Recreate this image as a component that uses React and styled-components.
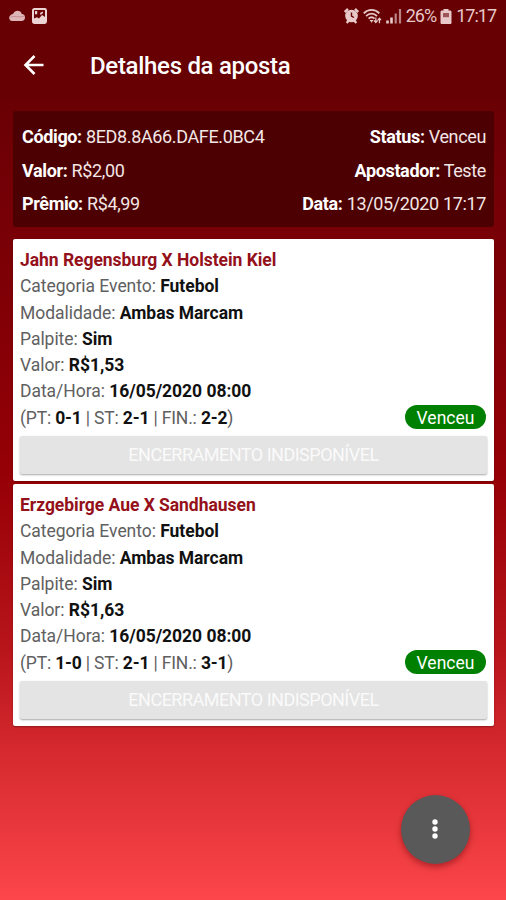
import React from "react";
import styled, {createGlobalStyle} from "styled-components";

const GlobalStyle = createGlobalStyle`
  * {
    box-sizing: border-box;
  }

  body {
    margin: 0;
    font-family: Roboto, sans-serif;
  }
`

const Screen = styled.div`
  width: 100%;
  height: 100vh;
  min-height: 900px;
  position: relative;
  display: flex;
  flex-direction: column;
  overflow: hidden;
  background: linear-gradient(180deg, #660003 0, #6a0004 100px, #780006 235px, #960006 480px, #b8151b 650px, #d0262b 735px, #fc464b 900px);
`

const StatusBar = styled.div`
  height: 32px;
  padding: 0 10px 0 9px;
  display: flex;
  align-items: center;
  justify-content: space-between;
  background-color: #660003;
  color: #e8c8c9;
`

const StatusGroup = styled.div`
  display: flex;
  align-items: center;
  gap: ${props => props.$gap || "4px"};
`

const StatusText = styled.span`
  font-size: 18px;
  line-height: 32px;
  letter-spacing: ${props => props.$spacing || "0"};
`

const Toolbar = styled.header`
  height: 68px;
  padding: 0 21px;
  display: flex;
  align-items: center;
  gap: 42px;
  background-color: #660003;
`

const BackButton = styled.button`
  width: 27px;
  height: 28px;
  padding: 0 0 2px;
  border: 0;
  display: flex;
  align-items: center;
  background: none;
  color: #fff;
`

const Title = styled.h1`
  margin: 0;
  font-size: 24px;
  line-height: 28px;
  font-weight: 500;
  letter-spacing: -0.3px;
  color: #fff;
`

const Content = styled.main`
  padding: 11px 12px 0 13px;
`

const Summary = styled.section`
  height: 116px;
  padding: 9px 8px 7px 9px;
  display: flex;
  flex-direction: column;
  border-radius: 3px;
  background-color: #4c0001;
`

const SummaryRow = styled.div`
  display: flex;
  justify-content: space-between;
  font-size: 18px;
  line-height: 33.5px;
  letter-spacing: -0.36px;
  color: #f3e6e6;

  b {
    font-weight: 700;
    color: #fff;
  }
`

const BetList = styled.div`
  margin-top: 12px;
  display: flex;
  flex-direction: column;
  gap: 3px;
`

const BetCard = styled.article`
  height: 242px;
  padding: 8px 7px 0 7px;
  border-radius: 2px;
  background-color: #fff;
  box-shadow: 0 1px 2px rgba(60, 0, 0, 0.4);
`

const Line = styled.div`
  font-size: 17.5px;
  line-height: 26.3px;
  letter-spacing: ${props => props.$spacing || "-0.04px"};
  color: #606060;

  b {
    font-weight: 700;
    color: #111;
  }
`

const Match = styled(Line)`
  font-weight: 700;
  color: #94101a;
`

const ScoreRow = styled.div`
  padding-right: 1px;
  display: flex;
  align-items: flex-start;
  justify-content: space-between;
`

const Badge = styled.span`
  width: 81px;
  height: 24px;
  border-radius: 12px;
  font-size: 17.5px;
  line-height: 26px;
  text-align: center;
  color: #fff;
  background-color: #008000;
`

const CloseButton = styled.button`
  width: 100%;
  height: 38px;
  margin-top: 5px;
  padding: 0;
  border: 0;
  border-radius: 2px;
  display: block;
  font-family: inherit;
  font-size: 18px;
  line-height: 38px;
  letter-spacing: -0.5px;
  color: #fafafa;
  background-color: #e4e4e4;
  box-shadow: 0 1px 2px rgba(0, 0, 0, 0.35);
`

const Fab = styled.button`
  width: 69px;
  height: 69px;
  position: absolute;
  right: 36px;
  bottom: 36px;
  padding: 0 1px 1px 0;
  border: 0;
  border-radius: 50%;
  display: flex;
  align-items: center;
  justify-content: center;
  background-color: #595959;
  box-shadow: 0 3px 6px rgba(90, 0, 0, 0.45);
`

const bets = [
    {
        id: 1,
        match: 'Jahn Regensburg X Holstein Kiel',
        value: 'R$1,53',
        scores: ['0-1', '2-1', '2-2']
    },
    {
        id: 2,
        match: 'Erzgebirge Aue X Sandhausen',
        value: 'R$1,63',
        scores: ['1-0', '2-1', '3-1']
    }
]

const CloudIcon = () => (
    <svg width="17" height="12" viewBox="0 0 17 12">
        <path d="M3.5 11A3.2 3.2 0 0 1 1 5.7 3.5 3.5 0 0 1 4 4C5 1.8 6.8.8 8.5.8c2 0 3.7 1.2 4.3 3.2A3.6 3.6 0 0 1 16 7.5c0 2-1.4 3.5-3.3 3.5Z" fill="#dfb6b8"/>
        <path d="M1.5 7.2C5 5.4 9 7.8 15.5 6.3" fill="none" stroke="#c48f92" strokeWidth="1"/>
    </svg>
)

const ImageIcon = () => (
    <svg width="15" height="16" viewBox="0 0 15 16">
        <rect x="1" y="1" width="13" height="14" rx="1.4" fill="#690006" stroke="#edd4d4" strokeWidth="2"/>
        <path d="M2 14v-3.5l3-1.2 2 1.2 3-3.5 3 2V14Z" fill="#edd4d4"/>
        <path d="M3 3h2.2v3.2H3ZM8 5l3-1.5v1.5L8.5 7Z" fill="#edd4d4"/>
    </svg>
)

const AlarmIcon = () => (
    <svg width="15" height="16" viewBox="0 0 15 16">
        <path d="M.8 4 4 1M14.2 4 11 1M2.7 15l2-2.5M12.3 15l-2-2.5" stroke="currentColor" strokeWidth="2.4"/>
        <circle cx="7.5" cy="8" r="6.3" fill="currentColor"/>
        <path d="M7.5 4.5V8l2.4 1.5" fill="none" stroke="#660003" strokeWidth="1.4"/>
    </svg>
)

const WifiIcon = () => (
    <svg width="19" height="17" viewBox="0 0 20 17">
        <g fill="none" stroke="currentColor" strokeWidth="1.9">
            <path d="M.8 5.2C5.5.4 12.5.4 17.2 5.2"/>
            <path d="M3.3 8c3.3-3.3 8.1-3.3 11.4 0"/>
            <path d="M5.9 10.7c1.9-1.8 4.3-1.8 6.2 0"/>
        </g>
        <path d="M7 12.3h4L9 15Z" fill="currentColor"/>
        <path d="M13.5 9.5v5M11.5 12.5l2 2.3 2-2.3M17.3 15.5v-5M15.6 12.3l1.7-2 1.7 2" fill="none" stroke="currentColor" strokeWidth="1.3"/>
    </svg>
)

const SignalIcon = () => (
    <svg width="16" height="15" viewBox="0 0 16 15">
        <path d="M1.5 14.5v-3M5.5 14.5v-6" stroke="currentColor" strokeWidth="2.6"/>
        <path d="M9.7 14.5v-10M14 14.5V0" stroke="currentColor" strokeWidth="2.2" opacity=".65"/>
    </svg>
)

const BatteryIcon = () => (
    <svg width="12" height="15" viewBox="0 0 12 15">
        <path d="M3.5 0h5v1.5H10c1 0 1.5.5 1.5 1.5v10.5c0 1-.5 1.5-1.5 1.5H2c-1 0-1.5-.5-1.5-1.5V3c0-1 .5-1.5 1.5-1.5h1.5Z" fill="currentColor"/>
        <path d="M3 4h6v4.2H3Z" fill="#9d5557"/>
    </svg>
)

const ArrowIcon = () => (
    <svg width="27" height="28" viewBox="0 0 27 28">
        <path d="M13.5 5 4.5 14l9 9M4.5 14H22.5" fill="none" stroke="currentColor" strokeWidth="2.6"/>
    </svg>
)

const DotsIcon = () => (
    <svg width="8" height="22" viewBox="0 0 8 22" fill="#fff">
        <circle cx="4" cy="4" r="2.7"/>
        <circle cx="4" cy="11" r="2.7"/>
        <circle cx="4" cy="18" r="2.7"/>
    </svg>
)

const Bet = ({bet}) => (
    <BetCard>
        <Match>{bet.match}</Match>
        <Line>Categoria Evento: <b>Futebol</b></Line>
        <Line>Modalidade: <b>Ambas Marcam</b></Line>
        <Line>Palpite: <b>Sim</b></Line>
        <Line>Valor: <b>{bet.value}</b></Line>
        <Line>Data/Hora: <b>16/05/2020 08:00</b></Line>
        <ScoreRow>
            <Line $spacing="-0.17px">
                (PT: <b>{bet.scores[0]}</b> | ST: <b>{bet.scores[1]}</b> | FIN.: <b>{bet.scores[2]}</b>)
            </Line>
            <Badge>Venceu</Badge>
        </ScoreRow>
        <CloseButton disabled>ENCERRAMENTO INDISPONÍVEL</CloseButton>
    </BetCard>
)

const App = () => (
    <Screen>
        <GlobalStyle/>
        <StatusBar>
            <StatusGroup $gap="6px">
                <CloudIcon/>
                <ImageIcon/>
            </StatusGroup>
            <StatusGroup>
                <AlarmIcon/>
                <WifiIcon/>
                <SignalIcon/>
                <StatusText $spacing="-1px">26%</StatusText>
                <BatteryIcon/>
                <StatusText $spacing="-1px">17:17</StatusText>
            </StatusGroup>
        </StatusBar>
        <Toolbar>
            <BackButton aria-label="Voltar"><ArrowIcon/></BackButton>
            <Title>Detalhes da aposta</Title>
        </Toolbar>
        <Content>
            <Summary>
                <SummaryRow>
                    <span><b>Código:</b> 8ED8.8A66.DAFE.0BC4</span>
                    <span><b>Status:</b> Venceu</span>
                </SummaryRow>
                <SummaryRow>
                    <span><b>Valor:</b> R$2,00</span>
                    <span><b>Apostador:</b> Teste</span>
                </SummaryRow>
                <SummaryRow>
                    <span><b>Prêmio:</b> R$4,99</span>
                    <span><b>Data:</b> 13/05/2020 17:17</span>
                </SummaryRow>
            </Summary>
            <BetList>
                {bets.map(bet => (
                    <Bet key={bet.id} bet={bet}/>
                ))}
            </BetList>
        </Content>
        <Fab aria-label="Mais opções"><DotsIcon/></Fab>
    </Screen>
)

export default App;
